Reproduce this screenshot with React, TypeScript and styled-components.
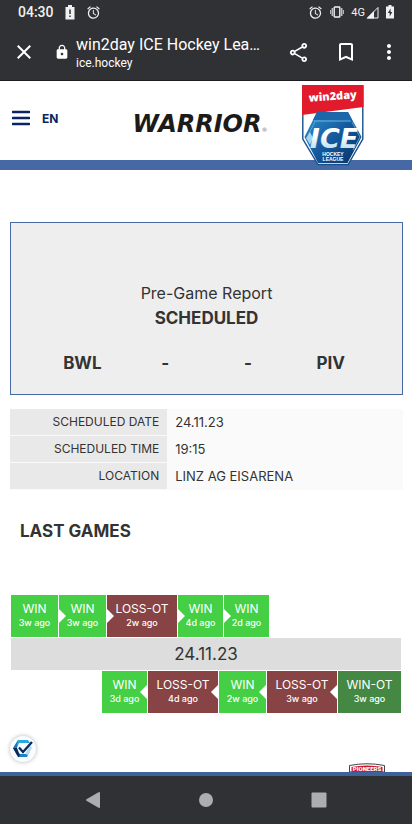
import React from "react";
import styled, { createGlobalStyle } from "styled-components";
import {
  MdAlarm,
  MdBookmarkBorder,
  MdClose,
  MdLock,
  MdMoreVert,
  MdOutlineShare,
} from "react-icons/md";

const Global = createGlobalStyle`
  *, *::before, *::after { box-sizing: border-box; }
  body { margin: 0; background: #fff; color: #333; font-family: Inter, sans-serif; }
  button { border: 0; padding: 0; margin: 0; background: none; color: inherit; font: inherit; display: flex; cursor: pointer; }
  svg { display: block; flex: none; }
`;

const Screen = styled.div`
  min-height: 100vh;
  display: flex;
  flex-direction: column;
`;

const BrowserChrome = styled.header`
  background: #303134;
  color: #fff;
  font-family: Roboto, sans-serif;
  border-bottom: 1px solid #1e1c20;
`;

const StatusBar = styled.div`
  display: flex;
  justify-content: space-between;
  align-items: center;
  height: 24px;
  padding: 0 18px;
  color: #f1f1f1;
`;

const StatusGroup = styled.div<{ $gap: number }>`
  display: flex;
  align-items: center;
  gap: ${(p) => p.$gap}px;
`;

const Clock = styled.span`
  font-size: 14px;
  font-weight: 500;
`;

const Network = styled.span`
  display: flex;
  align-items: center;
  gap: 1px;
  font-size: 11px;
`;

const Toolbar = styled.div`
  display: flex;
  align-items: center;
  height: 56px;
  padding: 0 12px;
`;

const PageInfo = styled.div`
  flex: 1;
  min-width: 0;
  display: flex;
  align-items: center;
  gap: 6px;
  margin-left: 18px;
`;

const TitleBlock = styled.div`
  min-width: 0;
  padding-top: 1px;
`;

const Title = styled.div`
  font-size: 16px;
  line-height: 20px;
  white-space: nowrap;
`;

const Domain = styled.div`
  font-size: 12px;
  line-height: 16px;
`;

const ToolbarActions = styled.div`
  display: flex;
  align-items: center;
  gap: 24px;

  button:last-child {
    margin: 0 -1px 0 -5px;
  }
`;

const SiteHeader = styled.div`
  position: relative;
  display: grid;
  grid-template-columns: 1fr auto 1fr;
  align-items: center;
  height: 89px;
  padding: 0 12px 5px;
  border-bottom: 10px solid #4669a5;
  color: #0b2560;
`;

const HeaderLeft = styled.div`
  display: flex;
  align-items: center;
  gap: 12px;
`;

const Language = styled.button`
  font-size: 12px;
  font-weight: 700;
`;

const Sponsor = styled.a`
  margin-right: 12px;
  padding-top: 11px;
  font: italic 700 24px/24px "DejaVu Sans", sans-serif;
  color: #1c1b19;
  text-decoration: none;
`;

const Registered = styled.span`
  font: 400 6px "DejaVu Sans", sans-serif;
  color: #777;
`;

const LeagueLogo = styled.a`
  position: absolute;
  right: 48px;
  top: 4px;
`;

const Content = styled.main`
  flex: 1;
  display: flex;
  flex-direction: column;
  padding: 52px 10px 0;
`;

const ReportCard = styled.section`
  margin-right: -1px;
  padding: 58px 30px 17px;
  border: 1px solid #4669a0;
  background: #eee;
  text-align: center;
`;

const ReportTitle = styled.h1`
  margin: 0;
  font-size: 16px;
  line-height: 25px;
  font-weight: 400;
`;

const ReportState = styled.p`
  margin: 0;
  font-size: 17px;
  line-height: 25px;
  font-weight: 700;
`;

const ScoreRow = styled.div`
  display: grid;
  grid-template-columns: repeat(4, 1fr);
  margin-top: 18px;
  font-size: 17px;
  line-height: 28px;
  font-weight: 700;
`;

const Details = styled.table`
  width: calc(100% + 1px);
  margin-top: 14px;
  border-collapse: collapse;
  font-size: 13px;
  line-height: 26px;
  background: #fafafa;

  th {
    width: 40%;
    padding: 0 8px;
    text-align: right;
    font-size: 12px;
    font-weight: 400;
    background: #e9e9e9;
    border-bottom: 1px solid #fafafa;
  }

  td {
    padding: 0 8px;
  }
`;

const SectionTitle = styled.h2`
  margin: 29px 10px 0;
  font-size: 17px;
  line-height: 24px;
  font-weight: 700;
`;

const Timeline = styled.section`
  margin: 52px 1px 0;
`;

const GameList = styled.div<{ $side: "home" | "away" }>`
  display: flex;
  gap: 1px;
  justify-content: ${(p) => (p.$side === "home" ? "flex-start" : "flex-end")};
`;

const tones = { win: "#44cf44", loss: "#884444", extra: "#448844" };
type Tone = keyof typeof tones;

const GameChip = styled.div<{ $tone: Tone; $width: number; $arrow?: "left" | "right" }>`
  position: relative;
  width: ${(p) => p.$width}px;
  padding: 6px 0 8px;
  background: ${(p) => tones[p.$tone]};
  color: #fff;
  text-align: center;
  white-space: nowrap;

  &::before {
    content: "";
    display: ${(p) => (p.$arrow ? "block" : "none")};
    position: absolute;
    top: 14px;
    ${(p) => (p.$arrow === "right" ? "left: 0;" : "right: 0;")}
    border: 7px solid transparent;
    ${(p) =>
      p.$arrow === "right"
        ? "border-left-color: #fff; border-right-width: 0;"
        : "border-right-color: #fff; border-left-width: 0;"}
  }
`;

const Result = styled.div`
  font-size: 12px;
  line-height: 16px;
`;

const When = styled.div`
  font-size: 9px;
  line-height: 12px;
  font-weight: 500;
`;

const DateBar = styled.div`
  margin: 1px 0;
  background: #ddd;
  text-align: center;
  font-size: 17px;
  line-height: 32px;
`;

const BottomRow = styled.div`
  flex: 1;
  display: flex;
  justify-content: space-between;
  align-items: flex-end;
  padding-right: 17px;
`;

const ConsentButton = styled.button`
  && {
    width: 26px;
    height: 26px;
    margin-bottom: 10px;
    align-items: center;
    justify-content: center;
    border-radius: 50%;
    background: #fafdff;
    box-shadow: 0 0 4px rgba(0, 0, 0, 0.3);
  }
`;

const NavBar = styled.nav`
  display: flex;
  justify-content: center;
  align-items: center;
  gap: 97px;
  height: 52px;
  border-top: 4px solid #3e629b;
  background: #303134;
`;

type Game = { result: string; when: string; tone: Tone; width: number };

const homeGames: Game[] = [
  { result: "WIN", when: "3w ago", tone: "win", width: 47 },
  { result: "WIN", when: "3w ago", tone: "win", width: 47 },
  { result: "LOSS-OT", when: "2w ago", tone: "loss", width: 70 },
  { result: "WIN", when: "4d ago", tone: "win", width: 45 },
  { result: "WIN", when: "2d ago", tone: "win", width: 45 },
];

const awayGames: Game[] = [
  { result: "WIN", when: "3d ago", tone: "win", width: 45 },
  { result: "LOSS-OT", when: "4d ago", tone: "loss", width: 70 },
  { result: "WIN", when: "2w ago", tone: "win", width: 47 },
  { result: "LOSS-OT", when: "3w ago", tone: "loss", width: 70 },
  { result: "WIN-OT", when: "3w ago", tone: "extra", width: 63 },
];

const details = [
  ["SCHEDULED DATE", "24.11.23"],
  ["SCHEDULED TIME", "19:15"],
  ["LOCATION", "LINZ AG EISARENA"],
];

function BatteryAlertIcon() {
  return (
    <svg width="10" height="15" viewBox="0 0 10 15" aria-hidden="true">
      <path d="M3 0H7V2H9.500V14.500H.5V2H3Z" fill="#f1f1f1" />
      <path d="M5 4.500v4.500M5 10.500v1.600" stroke="#303134" strokeWidth="1.5" />
    </svg>
  );
}

function BatteryChargingIcon() {
  return (
    <svg width="8" height="14" viewBox="0 0 8 14" aria-hidden="true">
      <path d="M2.500 0H5.500V1.500H8V13.500H0V1.500H2.500Z" fill="#f1f1f1" />
      <path d="M4.600 3.500 1.800 8H3.700V11.500L6.300 7H4.600Z" fill="#303134" />
    </svg>
  );
}

function VibrationIcon() {
  return (
    <svg width="14" height="12" viewBox="0 0 14 12" aria-hidden="true">
      <rect x="4.200" y="1" width="5.600" height="10" rx=".6" fill="none" stroke="#f1f1f1" strokeWidth="1.400" />
      <path d="M2.300 2v8M11.700 2v8" stroke="#bdbdbe" strokeWidth="1.500" />
      <path d="M.6 4v4M13.400 4v4" stroke="#bdbdbe" strokeWidth="1.100" />
    </svg>
  );
}

function SignalIcon() {
  return (
    <svg width="13" height="13" viewBox="0 0 13 13" aria-hidden="true">
      <path d="M12 1.5V12H1.5Z" fill="none" stroke="#f1f1f1" />
      <path d="M8 5V12.5H.5Z" fill="#f1f1f1" />
    </svg>
  );
}

function MenuIcon() {
  return (
    <svg width="18" height="16" viewBox="0 0 18 16" aria-hidden="true">
      <path d="M1 2h16M1 8h16M1 14h16" stroke="#0b2560" strokeWidth="2.6" strokeLinecap="round" />
    </svg>
  );
}

function ShieldLogo() {
  return (
    <svg width="62" height="82" viewBox="0 0 62 82" role="img" aria-label="win2day ICE Hockey League">
      <defs>
        <linearGradient id="shield" x1="0" y1="0" x2="1" y2="1">
          <stop offset="0" stopColor="#2f92cf" />
          <stop offset="0.5" stopColor="#155a9f" />
          <stop offset="1" stopColor="#07305f" />
        </linearGradient>
        <linearGradient id="letters" x1="0" y1="0" x2="0" y2="1">
          <stop offset="0.4" stopColor="#fff" />
          <stop offset="1" stopColor="#a4d5f0" />
        </linearGradient>
      </defs>
      <path d="M.8 1H60.800V54L46 79.500H16L.8 54Z" fill="#fff" stroke="#15508e" strokeWidth="1.4" />
      <path d="M0 0H61.500V22L0 30Z" fill="#e11b2c" />
      <path d="M15 27H46L59.500 52 45.500 78H16L2.500 52Z" fill="url(#shield)" />
      <path d="M15 27H46L50 35H11Z" fill="#1c66a9" />
      <path d="M12 36H49" stroke="#63bce6" strokeWidth="1.200" />
      <path d="M6 50 13 37M50 37l8 15-7 13" fill="none" stroke="#4ba8dd" />
      <path d="M4 53 8 47l3 6-3 7Z" fill="#a4d5f0" />
      <text x="31" y="15" textAnchor="middle" fill="#fff" fontFamily="Open Sans" fontWeight="800" fontSize="11" transform="rotate(-4 31 15)">
        win2day
      </text>
      <text x="32" y="63" textAnchor="middle" fill="url(#letters)" fontFamily="DejaVu Sans" fontStyle="italic" fontWeight="700" fontSize="27">
        ICE
      </text>
      <text x="31" y="71" textAnchor="middle" fill="#fff" fontFamily="Liberation Sans" fontWeight="700" fontSize="5">
        HOCKEY
      </text>
      <text x="31" y="76" textAnchor="middle" fill="#fff" fontFamily="Liberation Sans" fontWeight="700" fontSize="5">
        LEAGUE
      </text>
    </svg>
  );
}

function ConsentIcon() {
  return (
    <svg width="20" height="20" viewBox="0 0 20 20" aria-hidden="true">
      <path d="M5 1h10l2 3H6L4 9 1 8Z" fill="#28a8dc" />
      <path d="M5 1 0 9l4 7V5Z" fill="#1579bf" />
      <path d="M0 9l5 9h4l-3-4-2-5Z" fill="#0a2b5b" />
      <path d="M7 15h8l2-3-3 6H6Z" fill="#1685c7" />
      <path d="M17 6l2 3-4 7-3-1Z" fill="#b9d8ef" />
      <path d="M6 8.5l4 4.5 9-10" fill="none" stroke="#0a2b5b" strokeWidth="2.3" />
    </svg>
  );
}

function PioneersLogo() {
  return (
    <svg width="36" height="9" viewBox="0 0 36 9" role="img" aria-label="Pioneers">
      <path d="M.5 9V2.5Q18-1 35.500 2.500V9Z" fill="#fff" stroke="#39464d" />
      <path d="M2.500 9V4Q18 1 33.500 4V9Z" fill="#ce1733" />
      <text x="18" y="8" textAnchor="middle" fill="#fff" fontFamily="Roboto" fontWeight="900" fontSize="6">
        PIONEERS
      </text>
    </svg>
  );
}

function Games({ games, side }: { games: Game[]; side: "home" | "away" }) {
  return (
    <GameList $side={side}>
      {games.map((game, i) => {
        const home = side === "home";
        const hasArrow = home ? i > 0 : i < games.length - 1;
        return (
          <GameChip
            key={i}
            $tone={game.tone}
            $width={game.width}
            $arrow={hasArrow ? (home ? "right" : "left") : undefined}
          >
            <Result>{game.result}</Result>
            <When>{game.when}</When>
          </GameChip>
        );
      })}
    </GameList>
  );
}

export default function App() {
  return (
    <Screen>
      <Global />
      <BrowserChrome>
        <StatusBar>
          <StatusGroup $gap={11}>
            <Clock>04:30</Clock>
            <BatteryAlertIcon />
            <MdAlarm size={15} />
          </StatusGroup>
          <StatusGroup $gap={7}>
            <MdAlarm size={15} />
            <VibrationIcon />
            <Network>
              4G
              <SignalIcon />
            </Network>
            <BatteryChargingIcon />
          </StatusGroup>
        </StatusBar>
        <Toolbar>
          <button aria-label="Close">
            <MdClose size={24} />
          </button>
          <PageInfo>
            <MdLock size={16} />
            <TitleBlock>
              <Title>win2day ICE Hockey Lea…</Title>
              <Domain>ice.hockey</Domain>
            </TitleBlock>
          </PageInfo>
          <ToolbarActions>
            <button aria-label="Share">
              <MdOutlineShare size={23} />
            </button>
            <button aria-label="Bookmark">
              <MdBookmarkBorder size={24} />
            </button>
            <button aria-label="More options">
              <MdMoreVert size={24} />
            </button>
          </ToolbarActions>
        </Toolbar>
      </BrowserChrome>

      <SiteHeader>
        <HeaderLeft>
          <button aria-label="Menu">
            <MenuIcon />
          </button>
          <Language>EN</Language>
        </HeaderLeft>
        <Sponsor href="#sponsor">
          WARRIOR<Registered>®</Registered>
        </Sponsor>
        <LeagueLogo href="#home">
          <ShieldLogo />
        </LeagueLogo>
      </SiteHeader>

      <Content>
        <ReportCard>
          <ReportTitle>Pre-Game Report</ReportTitle>
          <ReportState>SCHEDULED</ReportState>
          <ScoreRow>
            <span>BWL</span>
            <span>-</span>
            <span>-</span>
            <span>PIV</span>
          </ScoreRow>
        </ReportCard>

        <Details>
          <tbody>
            {details.map(([label, value]) => (
              <tr key={label}>
                <th scope="row">{label}</th>
                <td>{value}</td>
              </tr>
            ))}
          </tbody>
        </Details>

        <SectionTitle>LAST GAMES</SectionTitle>
        <Timeline>
          <Games games={homeGames} side="home" />
          <DateBar>24.11.23</DateBar>
          <Games games={awayGames} side="away" />
        </Timeline>

        <BottomRow>
          <ConsentButton aria-label="Consent settings">
            <ConsentIcon />
          </ConsentButton>
          <PioneersLogo />
        </BottomRow>
      </Content>

      <NavBar>
        <button aria-label="Back">
          <svg width="16" height="18" viewBox="0 0 16 18">
            <path d="M14 2v14L2 9Z" fill="#acadaf" stroke="#acadaf" strokeWidth="2" strokeLinejoin="round" />
          </svg>
        </button>
        <button aria-label="Home">
          <svg width="16" height="16" viewBox="0 0 16 16">
            <circle cx="8" cy="8" r="7" fill="#acadaf" />
          </svg>
        </button>
        <button aria-label="Recent apps">
          <svg width="16" height="16" viewBox="0 0 16 16">
            <rect x="0.5" y="0.5" width="15" height="15" rx="1" fill="#acadaf" />
          </svg>
        </button>
      </NavBar>
    </Screen>
  );
}
